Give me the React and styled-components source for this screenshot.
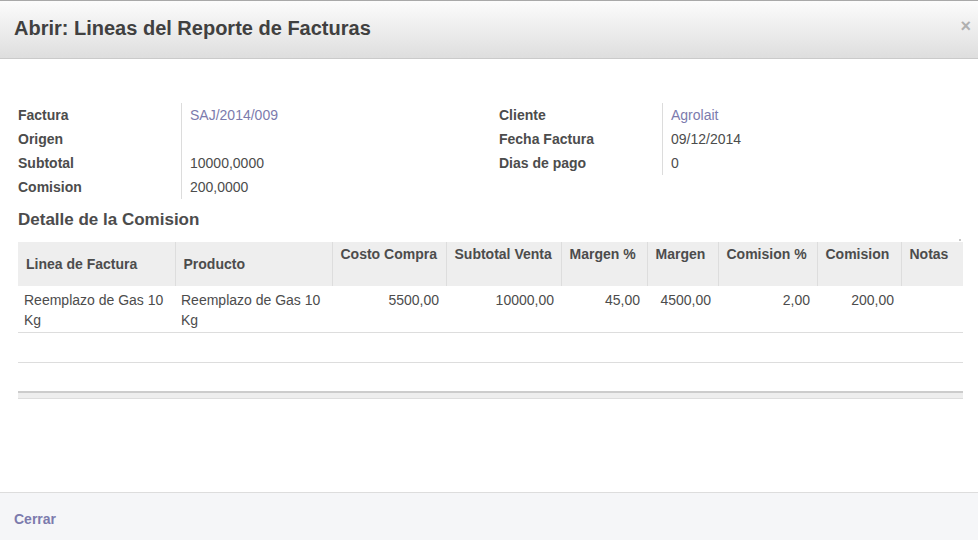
import styled, { createGlobalStyle } from "styled-components";

const GlobalStyle = createGlobalStyle`
	html, body {
		margin: 0;
		padding: 0;
		background: #fff;
	}
	body {
		font-family: "Liberation Sans", Arial, sans-serif;
		color: #4c4c4c;
	}
`;

const Modal = styled.div`
	display: flex;
	flex-direction: column;
	height: 100vh;
	width: 978px;
	overflow: hidden;
`;

const Header = styled.header`
	box-sizing: border-box;
	height: 59px;
	display: flex;
	align-items: center;
	justify-content: space-between;
	padding: 0 7px 0 14px;
	border-top: 1px solid #a9a9a9;
	border-bottom: 1px solid #cacaca;
	background: linear-gradient(to bottom, #fcfcfc, #dedede);

	h1 {
		margin: 0;
		font-size: 20px;
		font-weight: 700;
		color: #404040;
		padding-bottom: 2px;
	}
`;

const Close = styled.span`
	font-size: 18px;
	font-weight: 700;
	color: #b0b0b0;
	padding-bottom: 6px;
`;

const Body = styled.main`
	flex: 1;
	padding: 44px 15px 0 18px;
	font-size: 14px;
`;

const FormGrid = styled.div`
	display: grid;
	grid-template-columns: 1fr 1fr;
	column-gap: 17px;
	align-items: start;
`;

const Group = styled.div`
	display: grid;
	grid-template-columns: 163px 1fr;
	grid-auto-rows: 24px;
`;

const Label = styled.div`
	font-weight: 700;
	line-height: 24px;
	color: #4c4c4c;
`;

const Value = styled.div`
	border-left: 1px solid #dcdcdc;
	padding-left: 8px;
	line-height: 24px;
	color: ${(p) => (p.$link ? "#7c7bad" : "#4c4c4c")};
`;

const SectionTitle = styled.h2`
	margin: 11px 0 12px;
	font-size: 17px;
	line-height: 20px;
	font-weight: 700;
	color: #4c4c4c;
`;

const TableWrap = styled.div`
	position: relative;
	&::after {
		content: "";
		position: absolute;
		right: 2px;
		top: -3px;
		width: 2px;
		height: 2px;
		background: #c8c8c8;
	}
`;

const Table = styled.table`
	width: 945px;
	table-layout: fixed;
	border-collapse: collapse;
	font-size: 14px;
	color: #4c4c4c;
`;

const Th = styled.th`
	height: 44px;
	box-sizing: border-box;
	background: #eeeeee;
	font-weight: 700;
	text-align: left;
	vertical-align: ${(p) => (p.$middle ? "middle" : "top")};
	padding: ${(p) => (p.$middle ? "0 8px" : "2px 8px 0")};
	line-height: 20px;
	border-left: 1px solid #dddddd;
	white-space: nowrap;
	&:first-child {
		border-left: none;
	}
`;

const Td = styled.td`
	padding: 4px 7px 2px 6px;
	line-height: 20px;
	vertical-align: top;
	text-align: ${(p) => (p.$num ? "right" : "left")};
	border-bottom: 1px solid #dddddd;
`;

const EmptyRow = styled.tr`
	height: 30px;
	td {
		border-bottom: 1px solid #dddddd;
	}
`;

const Spacer = styled.tr`
	height: 29px;
`;

const FootRow = styled.tr`
	td {
		height: 5px;
		padding: 0;
		background: #eeeeee;
		border-top: 2px solid #cccccc;
		border-bottom: 1px solid #dddddd;
	}
`;

const Footer = styled.footer`
	box-sizing: border-box;
	height: 48px;
	display: flex;
	align-items: center;
	padding: 4px 14px 0;
	border-top: 1px solid #dddddd;
	background: #f5f6f8;
	font-size: 14px;
	font-weight: 700;
	color: #7c7bad;
`;

const columns = [
	{ title: "Linea de Factura", width: 157, middle: true },
	{ title: "Producto", width: 157, middle: true },
	{ title: "Costo Compra", width: 114 },
	{ title: "Subtotal Venta", width: 115 },
	{ title: "Margen %", width: 86 },
	{ title: "Margen", width: 71 },
	{ title: "Comision %", width: 99 },
	{ title: "Comision", width: 84 },
	{ title: "Notas", width: 62 },
];

function App() {
	return (
		<>
			<GlobalStyle />
			<Modal>
				<Header>
					<h1>Abrir: Lineas del Reporte de Facturas</h1>
					<Close>×</Close>
				</Header>
				<Body>
					<FormGrid>
						<Group>
							<Label>Factura</Label>
							<Value $link>SAJ/2014/009</Value>
							<Label>Origen</Label>
							<Value></Value>
							<Label>Subtotal</Label>
							<Value>10000,0000</Value>
							<Label>Comision</Label>
							<Value>200,0000</Value>
						</Group>
						<Group>
							<Label>Cliente</Label>
							<Value $link>Agrolait</Value>
							<Label>Fecha Factura</Label>
							<Value>09/12/2014</Value>
							<Label>Dias de pago</Label>
							<Value>0</Value>
						</Group>
					</FormGrid>
					<SectionTitle>Detalle de la Comision</SectionTitle>
					<TableWrap>
						<Table>
							<colgroup>
								{columns.map((c) => (
									<col key={c.title} style={{ width: c.width }} />
								))}
							</colgroup>
							<thead>
								<tr>
									{columns.map((c) => (
										<Th key={c.title} $middle={c.middle}>
											{c.title}
										</Th>
									))}
								</tr>
							</thead>
							<tbody>
								<tr>
									<Td>Reemplazo de Gas 10 Kg</Td>
									<Td>Reemplazo de Gas 10 Kg</Td>
									<Td $num>5500,00</Td>
									<Td $num>10000,00</Td>
									<Td $num>45,00</Td>
									<Td $num>4500,00</Td>
									<Td $num>2,00</Td>
									<Td $num>200,00</Td>
									<Td></Td>
								</tr>
								<EmptyRow>
									<td colSpan={9}></td>
								</EmptyRow>
								<Spacer>
									<td colSpan={9}></td>
								</Spacer>
							</tbody>
							<tfoot>
								<FootRow>
									<td colSpan={9}></td>
								</FootRow>
							</tfoot>
						</Table>
					</TableWrap>
				</Body>
				<Footer>Cerrar</Footer>
			</Modal>
		</>
	);
}

export default App;
